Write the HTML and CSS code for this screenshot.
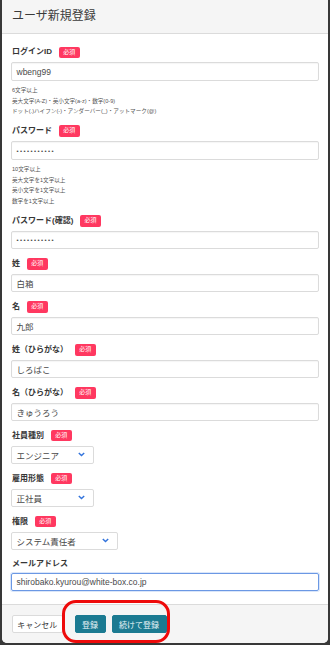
FILE: index.html
```html
<!DOCTYPE html>
<html lang="ja">
<head>
<meta charset="utf-8">
<title>ユーザ新規登録</title>
<link rel="stylesheet" href="styles.css">
</head>
<body>
<div class="card">
  <header class="card-head">ユーザ新規登録</header>
  <section class="card-body">
    <div class="field">
      <div class="label-row"><span class="label">ログインID</span><span class="tag">必須</span></div>
      <div class="input">wbeng99</div>
      <div class="help">
        <div>6文字以上</div>
        <div>英大文字(A-Z)・英小文字(a-z)・数字(0-9)</div>
        <div>ドット(.)ハイフン(-)・アンダーバー(_)・アットマーク(@)</div>
      </div>
    </div>
    <div class="field">
      <div class="label-row"><span class="label">パスワード</span><span class="tag">必須</span></div>
      <div class="input"><span class="dots">•••••••••••</span></div>
      <div class="help">
        <div>10文字以上</div>
        <div>英大文字を1文字以上</div>
        <div>英小文字を1文字以上</div>
        <div>数字を1文字以上</div>
      </div>
    </div>
    <div class="field">
      <div class="label-row"><span class="label">パスワード(確認)</span><span class="tag">必須</span></div>
      <div class="input"><span class="dots">•••••••••••</span></div>
    </div>
    <div class="field">
      <div class="label-row"><span class="label">姓</span><span class="tag">必須</span></div>
      <div class="input">白箱</div>
    </div>
    <div class="field">
      <div class="label-row"><span class="label">名</span><span class="tag">必須</span></div>
      <div class="input">九郎</div>
    </div>
    <div class="field">
      <div class="label-row"><span class="label">姓（ひらがな）</span><span class="tag">必須</span></div>
      <div class="input">しろばこ</div>
    </div>
    <div class="field">
      <div class="label-row"><span class="label">名（ひらがな）</span><span class="tag">必須</span></div>
      <div class="input">きゅうろう</div>
    </div>
    <div class="field">
      <div class="label-row"><span class="label">社員種別</span><span class="tag">必須</span></div>
      <div class="select select-md"><span>エンジニア</span><svg class="chev" width="7" height="5" viewBox="0 0 7 5"><polyline points="0.8,0.9 3.5,3.6 6.2,0.9" fill="none" stroke="#3273dc" stroke-width="1.4"/></svg></div>
    </div>
    <div class="field">
      <div class="label-row"><span class="label">雇用形態</span><span class="tag">必須</span></div>
      <div class="select select-md"><span>正社員</span><svg class="chev" width="7" height="5" viewBox="0 0 7 5"><polyline points="0.8,0.9 3.5,3.6 6.2,0.9" fill="none" stroke="#3273dc" stroke-width="1.4"/></svg></div>
    </div>
    <div class="field">
      <div class="label-row"><span class="label">権限</span><span class="tag">必須</span></div>
      <div class="select select-lg"><span>システム責任者</span><svg class="chev" width="7" height="5" viewBox="0 0 7 5"><polyline points="0.8,0.9 3.5,3.6 6.2,0.9" fill="none" stroke="#3273dc" stroke-width="1.4"/></svg></div>
    </div>
    <div class="field field-last">
      <div class="label-row label-row-plain"><span class="label">メールアドレス</span></div>
      <div class="input input-focus">shirobako.kyurou@white-box.co.jp</div>
    </div>
  </section>
  <footer class="card-foot">
    <button class="btn btn-cancel">キャンセル</button>
    <button class="btn btn-primary btn-first">登録</button>
    <button class="btn btn-primary">続けて登録</button>
  </footer>
</div>
<div class="annot"></div>
</body>
</html>
```
FILE: styles.css
```css
html, body {
  margin: 0;
  padding: 0;
}
body {
  width: 330px;
  height: 645px;
  background: #383838;
  font-family: "Liberation Sans", "Noto Sans CJK JP", sans-serif;
  color: #363636;
  position: relative;
  overflow: hidden;
}
.card {
  margin: 0 2px;
  width: 326px;
  height: 643px;
  background: #fff;
  border-radius: 0 0 5px 5px;
  overflow: hidden;
  display: flex;
  flex-direction: column;
}
.card-head {
  height: 33px;
  line-height: 33px;
  background: #f5f5f5;
  border-bottom: 1px solid #dbdbdb;
  padding-left: 10px;
  font-size: 12px;
  color: #3a3a3a;
  flex: none;
}
.card-body {
  flex: 1;
  padding: 12.5px 9px 0 9px;
}
.field {
  margin-bottom: 8.7px;
}
.field-last {
  margin-bottom: 0;
}
.label-row {
  display: flex;
  align-items: center;
  height: 11.7px;
  margin-bottom: 4.3px;
  padding-left: 1px;
}
.label-row-plain {
  height: 10px;
}
.label {
  font-size: 8px;
  font-weight: bold;
  color: #363636;
  line-height: 1;
}
.tag {
  display: inline-block;
  margin-left: 6.5px;
  height: 11.7px;
  line-height: 11.7px;
  padding: 0 4.7px;
  font-size: 6px;
  color: #fff;
  background: #ff3860;
  border-radius: 2px;
}
.input {
  box-sizing: border-box;
  height: 18.3px;
  border: 1px solid #dbdbdb;
  border-radius: 2px;
  box-shadow: inset 0 1px 1px rgba(10, 10, 10, 0.04);
  padding: 0 4.5px;
  display: flex;
  align-items: center;
  font-size: 8.5px;
  color: #4a4a4a;
}
.input-focus {
  border-color: #6b98e4;
  box-shadow: 0 0 0 1px rgba(50, 115, 220, 0.18);
}
.dots {
  font-size: 6px;
  letter-spacing: 1.4px;
  color: #4a4a4a;
}
.help {
  margin-top: 4.5px;
  margin-bottom: 1px;
  padding-left: 1px;
  font-size: 5.6px;
  line-height: 10.5px;
  color: #555;
}
.select {
  box-sizing: border-box;
  height: 18.3px;
  border: 1px solid #dbdbdb;
  border-radius: 2px;
  padding: 0 8px 0 4.5px;
  display: flex;
  align-items: center;
  justify-content: space-between;
  font-size: 8.5px;
  color: #4a4a4a;
}
.select-md {
  width: 83px;
}
.select-lg {
  width: 107px;
}
.chev {
  display: block;
}
.card-foot {
  flex: none;
  height: 38px;
  background: #f5f5f5;
  border-top: 1px solid #dbdbdb;
  display: flex;
  align-items: center;
  padding: 0 10px;
}
.btn {
  font-family: inherit;
  height: 18.5px;
  font-size: 8px;
  border-radius: 2px;
  margin: 0;
  cursor: pointer;
  display: flex;
  align-items: center;
}
.btn-cancel {
  background: #fff;
  border: 1px solid #dbdbdb;
  color: #363636;
  padding: 0 4.3px;
}
.btn-primary {
  background: #1b7a91;
  border: 1px solid #1b7a91;
  color: #e8f4f7;
  padding: 0 6.5px;
  margin-left: 6px;
}
.btn-first {
  margin-left: 12px;
}
.annot {
  position: absolute;
  left: 62px;
  top: 600px;
  width: 108px;
  height: 43px;
  box-sizing: border-box;
  border: 3.5px solid #ee0a0a;
  border-radius: 14px;
}
```
